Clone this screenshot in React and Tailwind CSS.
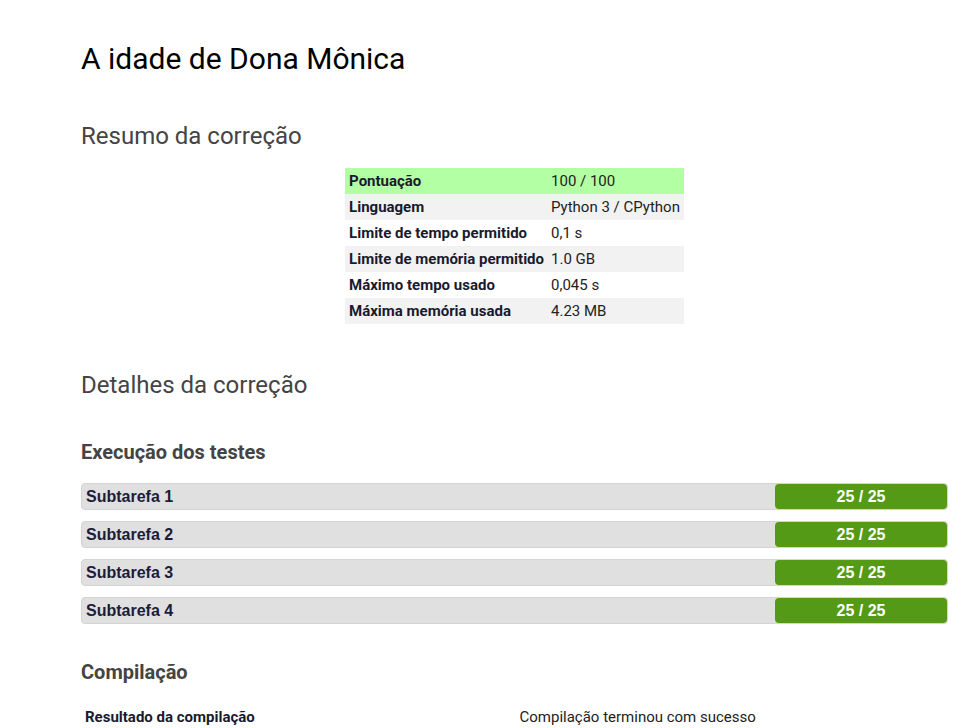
import React from 'react';

const resumo = [
  ['Pontuação', '100 / 100'],
  ['Linguagem', 'Python 3 / CPython'],
  ['Limite de tempo permitido', '0,1 s'],
  ['Limite de memória permitido', '1.0 GB'],
  ['Máximo tempo usado', '0,045 s'],
  ['Máxima memória usada', '4.23 MB'],
];

const subtarefas = [
  { name: 'Subtarefa 1', score: '25 / 25' },
  { name: 'Subtarefa 2', score: '25 / 25' },
  { name: 'Subtarefa 3', score: '25 / 25' },
  { name: 'Subtarefa 4', score: '25 / 25' },
];

export default function App() {
  return (
    <div className="min-h-[728px] bg-white font-['Roboto',sans-serif] overflow-hidden">
      <div className="ml-[81px] w-[867px] pt-[41px]">
        <h1 className="text-[30px] leading-[36px] text-black">A idade de Dona Mônica</h1>

        <h2 className="mt-[45px] text-[24px] leading-[29px] text-[#444]">Resumo da correção</h2>

        <div className="mt-[17px] flex justify-center">
          <table className="text-[15px] text-[#222]">
            <tbody>
              {resumo.map(([label, value], idx) => (
                <tr
                  key={label}
                  className={idx === 0 ? 'bg-[#b3ffa3]' : idx % 2 === 1 ? 'bg-[#f2f2f2]' : 'bg-white'}
                >
                  <td className="h-[26px] pl-[4px] pr-[4px] font-bold text-[#1a1a2e]">{label}</td>
                  <td className="h-[26px] pl-[3px] pr-[4px]">{value}</td>
                </tr>
              ))}
            </tbody>
          </table>
        </div>

        <h2 className="mt-[47px] text-[24px] leading-[29px] text-[#444]">Detalhes da correção</h2>

        <h3 className="mt-[40px] text-[20px] leading-[24px] font-bold text-[#444]">Execução dos testes</h3>

        <div className="mt-[19px] flex flex-col gap-[11px]">
          {subtarefas.map((s) => (
            <div
              key={s.name}
              className="flex items-center h-[27px] rounded-[4px] bg-[#e0e0e0] border border-[#d4d4d4]"
            >
              <span className="flex-1 pl-[4px] pt-[1px] font-['Liberation_Sans',Arial,sans-serif] font-bold text-[16px] text-[#1c1c3a]">
                {s.name}
              </span>
              <span className="w-[172px] h-[25px] rounded-[4px] bg-[#559a16] flex items-center justify-center font-['Liberation_Sans',Arial,sans-serif] font-bold text-[16px] text-white">
                {s.score}
              </span>
            </div>
          ))}
        </div>

        <h3 className="mt-[36px] text-[20px] leading-[24px] font-bold text-[#444]">Compilação</h3>

        <table className="mt-[18px] w-full text-[15px] text-[#222]">
          <tbody>
            <tr>
              <td className="w-1/2 pl-[4px] py-[4px] font-bold text-[#1a1a2e]">Resultado da compilação</td>
              <td className="w-1/2 pl-[5px] py-[4px]">Compilação terminou com sucesso</td>
            </tr>
          </tbody>
        </table>
      </div>
    </div>
  );
}
